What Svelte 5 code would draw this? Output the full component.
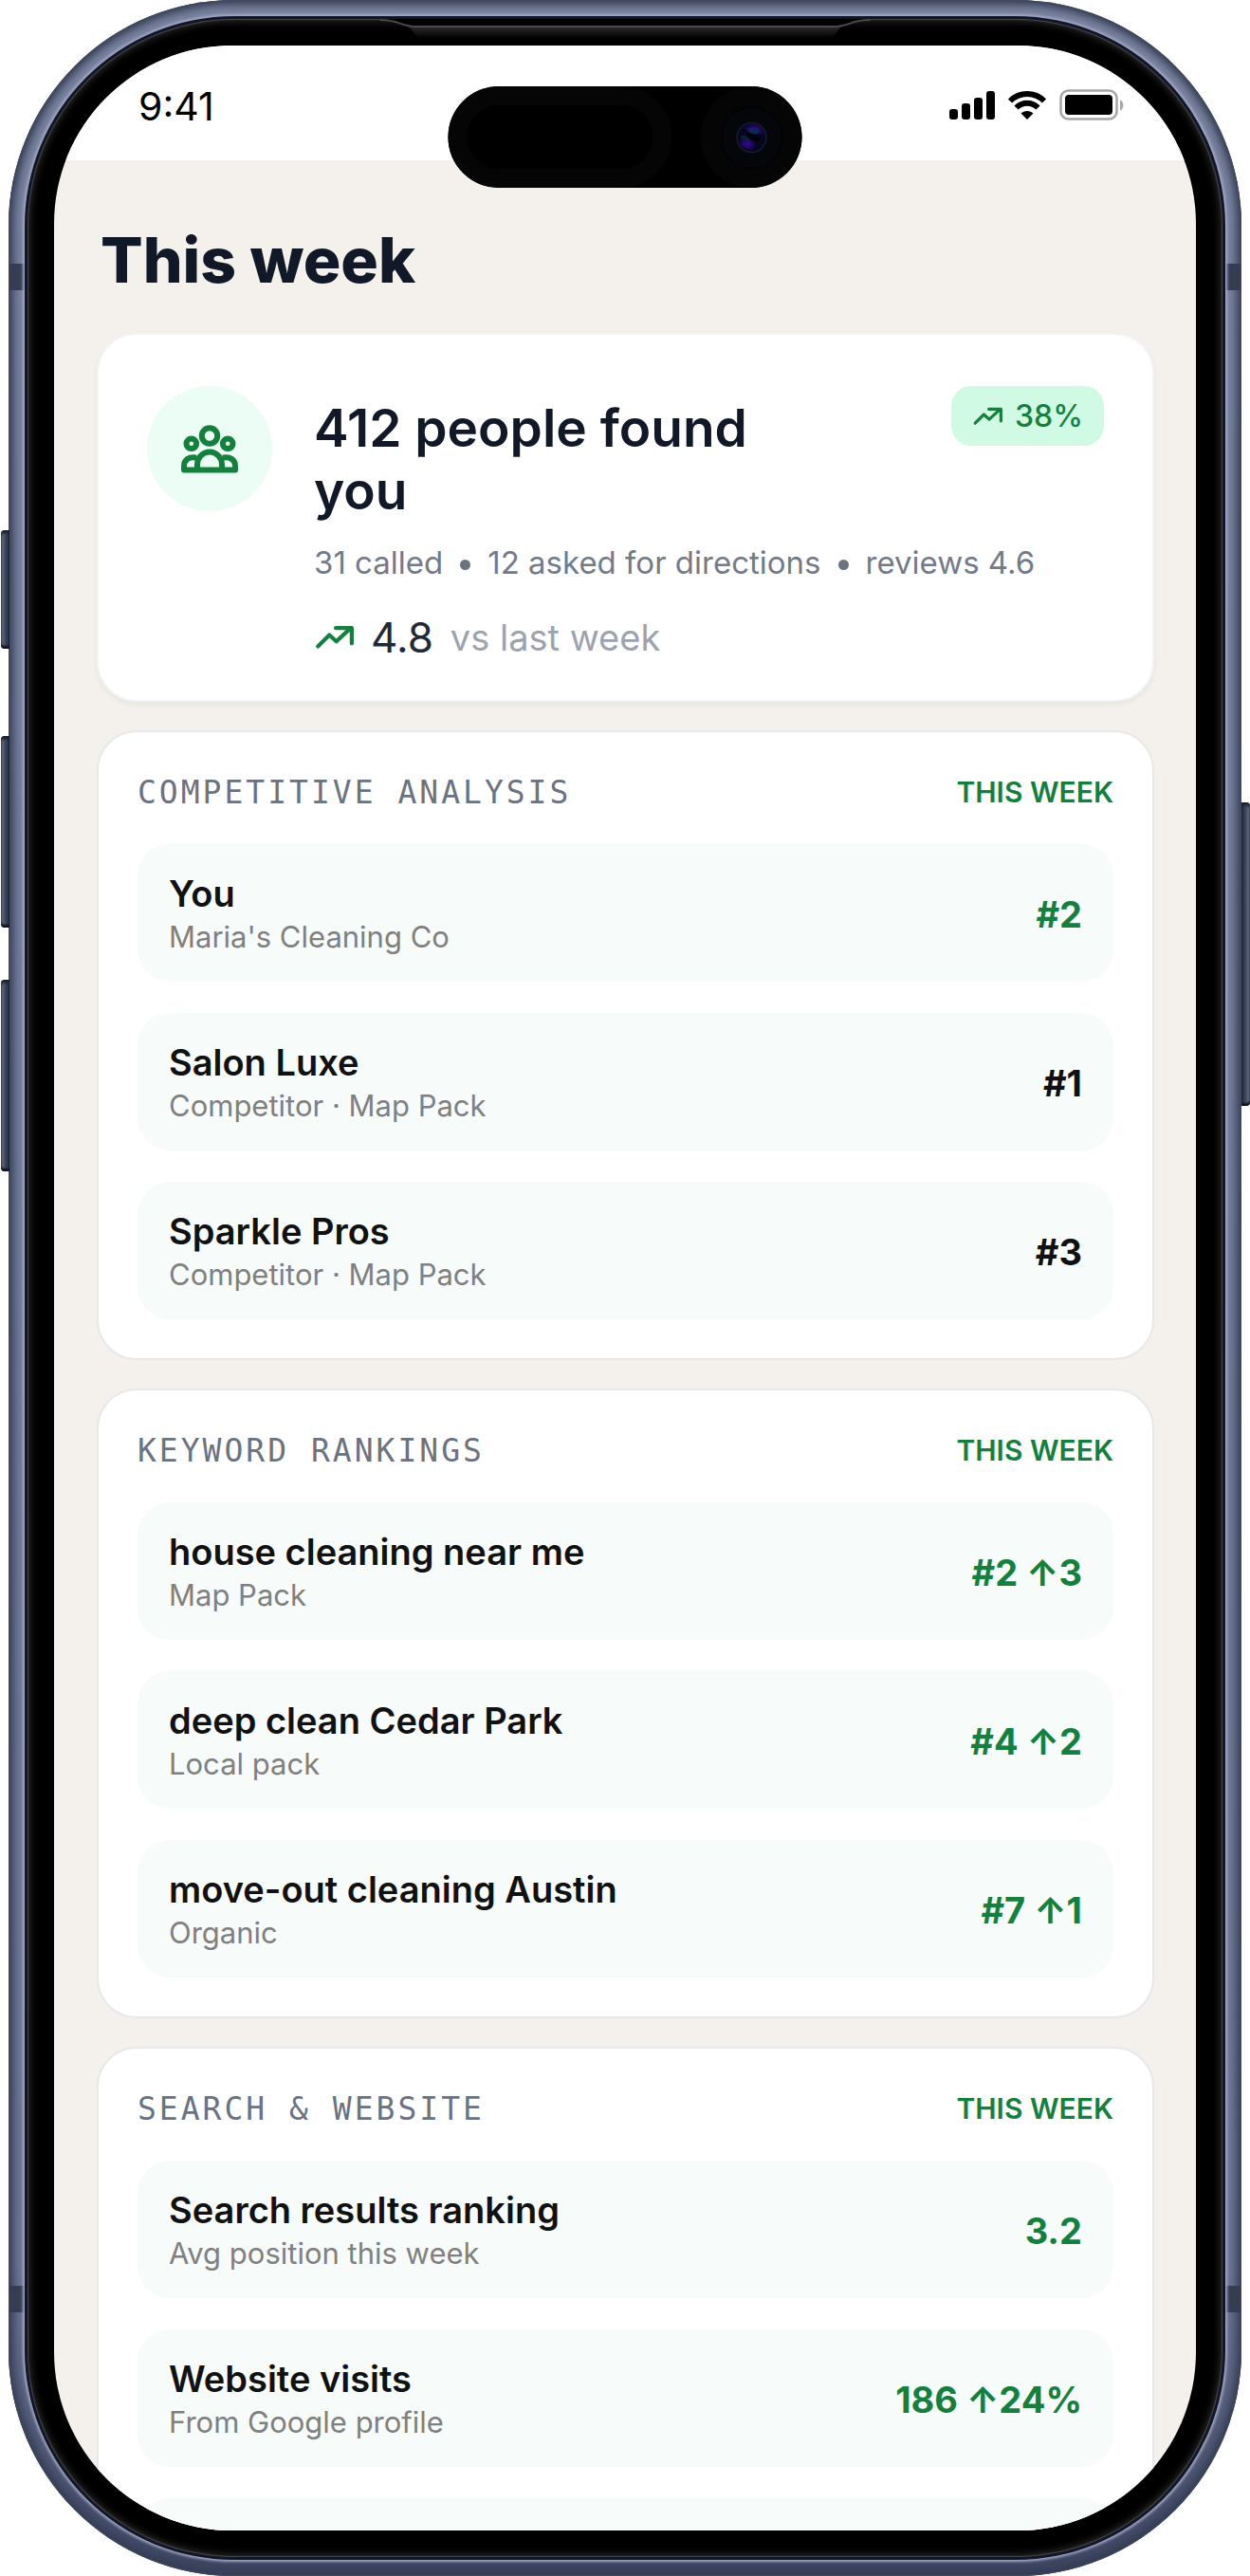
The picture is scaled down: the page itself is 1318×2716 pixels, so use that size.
<script>
  const sections = [
    {
      title: 'Competitive analysis',
      rows: [
        { name: 'You', note: "Maria's Cleaning Co", value: '#2', up: true },
        { name: 'Salon Luxe', note: 'Competitor · Map Pack', value: '#1', up: false },
        { name: 'Sparkle Pros', note: 'Competitor · Map Pack', value: '#3', up: false },
      ],
    },
    {
      title: 'Keyword rankings',
      rows: [
        { name: 'house cleaning near me', note: 'Map Pack', value: '#2 ↑3', up: true },
        { name: 'deep clean Cedar Park', note: 'Local pack', value: '#4 ↑2', up: true },
        { name: 'move-out cleaning Austin', note: 'Organic', value: '#7 ↑1', up: true },
      ],
    },
    {
      title: 'Search & website',
      rows: [
        { name: 'Search results ranking', note: 'Avg position this week', value: '3.2', up: true },
        { name: 'Website visits', note: 'From Google profile', value: '186 ↑24%', up: true },
        { name: '', note: '', value: '', up: false },
      ],
    },
  ];
</script>

{#snippet trend(width)}
  <svg class="trend" {width} viewBox="-2 0 40 24" aria-hidden="true">
    <path d="M2 21.500L13.500 10L20.500 16.500L35 3M20 3H36V18.500" />
  </svg>
{/snippet}

<div class="phone">
  <span class="key action"></span>
  <span class="key vol-up"></span>
  <span class="key vol-down"></span>
  <span class="key power"></span>
  <span class="band tl"></span>
  <span class="band tr"></span>
  <span class="band bl"></span>
  <span class="band br"></span>

  <div class="bezel">
    <svg class="earpiece" width="516" height="22" viewBox="0 0 516 22" aria-hidden="true">
      <defs>
        <linearGradient id="lip" x1="0" y1="0" x2="0" y2="1">
          <stop offset="0" stop-color="#2c2c2c" />
          <stop offset="1" stop-color="#000" />
        </linearGradient>
      </defs>
      <path d="M0 0H516V1C494 1 497 8 476 8H40C19 8 22 1 0 1Z" fill="#000" />
      <path d="M30 8H486L476 20H40Z" fill="url(#lip)" />
      <path d="M0 1C22 1 19 8 40 8H476C497 8 494 1 516 1" fill="none" stroke="#4a4a4a" stroke-width="2" />
    </svg>

    <div class="screen">
      <header class="status">
        <time>9:41</time>
        <div class="status-icons">
          <svg width="48" height="32" viewBox="0 0 48 32" aria-hidden="true">
            <rect x="0" y="20" width="9" height="11" rx="3" />
            <rect x="13" y="14" width="9" height="17" rx="3" />
            <rect x="26" y="8" width="9" height="23" rx="3" />
            <rect x="39" y="1" width="9" height="30" rx="3" />
          </svg>
          <svg width="42" height="32" viewBox="0 0 42 32" aria-hidden="true">
            <path d="M3 11.500C13 1.500 29 1.500 39 11.500" fill="none" stroke="#000" stroke-width="6" />
            <path d="M9.500 18.500C16 12 26 12 32.500 18.500" fill="none" stroke="#000" stroke-width="6" />
            <path d="M14.500 24.500C18 21 24 21 27.500 24.500L21 31Z" />
          </svg>
          <svg width="68" height="34" viewBox="0 0 68 34" aria-hidden="true">
            <rect x="1.500" y="1.500" width="59" height="30" rx="8" fill="none" stroke="#a6a6a6" stroke-width="2.500" />
            <rect x="6" y="6" width="50" height="21" rx="4" />
            <path d="M64 11.500C68.500 13 68.500 21 64 22.500Z" fill="#a6a6a6" />
          </svg>
        </div>
      </header>

      <main>
        <h1>This week</h1>

        <section class="card summary">
          <div class="avatar">
            <svg width="60" height="51" viewBox="0 0 60 51" aria-hidden="true">
              <circle cx="30" cy="11.500" r="8.200" />
              <circle cx="10.800" cy="19.800" r="5.300" />
              <circle cx="49.200" cy="19.800" r="5.300" />
              <path d="M17 47.500V41.500A13 13 0 0 1 43 41.500V47.500" />
              <path d="M16 34.500C8 33 3 37 3 43.500V47.500H57V43.500C57 37 52 33 44 34.500" />
            </svg>
          </div>
          <div class="summary-text">
            <div class="summary-head">
              <h2>412 people found you</h2>
              <span class="badge">{@render trend(32)}38%</span>
            </div>
            <p class="facts">
              <span>31 called</span><i></i><span>12 asked for directions</span><i></i><span>reviews 4.6</span>
            </p>
            <p class="score">
              {@render trend(42)}
              <strong>4.8</strong>
              <span>vs last week</span>
            </p>
          </div>
        </section>

        {#each sections as section}
          <section class="card group">
            <div class="group-head">
              <h3>{section.title}</h3>
              <span>THIS WEEK</span>
            </div>
            <ul>
              {#each section.rows as row}
                <li>
                  <div>
                    <p class="name">{row.name}</p>
                    <p class="note">{row.note}</p>
                  </div>
                  <b class:up={row.up}>{row.value}</b>
                </li>
              {/each}
            </ul>
          </section>
        {/each}
      </main>
    </div>

    <div class="island">
      <span class="sensor"></span>
      <span class="camera">
        <svg width="66" height="66" viewBox="0 0 66 66" aria-hidden="true">
          <defs>
            <radialGradient id="flare">
              <stop offset="0" stop-color="#330a94" />
              <stop offset="1" stop-color="#12043c" />
            </radialGradient>
          </defs>
          <circle cx="33" cy="33" r="32" fill="#04060a" stroke="#020305" stroke-width="2" />
          <circle cx="33" cy="33" r="15.500" fill="#06061f" stroke="#141d33" stroke-width="1.500" />
          <path d="M26 22C32 16 44 19 46 29C44 34 40 27 34 27C29 27 25 26 26 22Z" fill="url(#flare)" />
          <path d="M20 36C24 31 30 33 35 38C39 42 36 47 31 46C25 45 20 42 20 36Z" fill="url(#flare)" />
          <ellipse cx="35" cy="26" rx="6" ry="3" fill="#0c2950" transform="rotate(15 35 26)" />
          <ellipse cx="26" cy="34" rx="5" ry="3" fill="#0a1c40" transform="rotate(30 26 34)" />
          <ellipse cx="35" cy="33" rx="8" ry="3" fill="#020208" transform="rotate(20 35 33)" />
        </svg>
      </span>
    </div>
  </div>
</div>

<style>
  :global(body) {
    background: #fff;
  }
  .phone {
    position: relative;
    box-sizing: border-box;
    height: 100vh;
    margin: 0 9px;
    padding: 20px;
    border-radius: 238px;
    background: linear-gradient(#79829e, #6c7592 88%, #3c4460);
    box-shadow: inset 0 0 1px 1px #434a5c, inset 0 0 8px 5px #343c54;
    font-family: Inter, "Liberation Sans", sans-serif;
  }
  .key {
    position: absolute;
    left: -8px;
    width: 9px;
    border-radius: 4px 0 0 4px;
    background: linear-gradient(90deg, #7c8497, #414a62 45%, #262c42);
    box-shadow: inset 0 3px 3px #1a1f30, inset 0 -3px 2px #10131f;
  }
  .action { top: 559px; height: 125px; }
  .vol-up { top: 776px; height: 202px; }
  .vol-down { top: 1033px; height: 202px; }
  .power {
    top: 846px;
    right: -9px;
    left: auto;
    height: 320px;
    border-radius: 0 4px 4px 0;
    background: linear-gradient(270deg, #7c8497, #414a62 45%, #262c42);
  }
  .band {
    position: absolute;
    width: 17px;
    height: 28px;
    background: #363c52;
  }
  .tl { top: 278px; left: 1px; }
  .tr { top: 278px; right: 1px; }
  .bl { bottom: 278px; left: 1px; }
  .br { bottom: 278px; right: 1px; }

  .bezel {
    position: relative;
    box-sizing: border-box;
    height: 100%;
    padding: 28px;
    border-radius: 218px;
    background: #000;
    box-shadow: inset 0 0 1px 1px #484848, inset 0 0 9px 2px #303030,
      0 0 0 3px #11162a, 0 0 3px 5px #a3aac6;
  }
  .earpiece {
    position: absolute;
    top: 0;
    left: 50%;
    transform: translateX(-50%);
  }
  .screen {
    height: 100%;
    overflow: hidden;
    border-radius: 188px;
    background: #f4f0eb;
  }
  .island {
    position: absolute;
    top: 71px;
    left: 50%;
    display: flex;
    justify-content: space-between;
    width: 373px;
    height: 107px;
    border-radius: 54px;
    background: #000;
    transform: translateX(-50%);
  }
  .sensor {
    box-sizing: border-box;
    width: 236px;
    border: 20px solid #050505;
    border-radius: 54px;
  }
  .camera {
    display: grid;
    place-items: center;
    width: 107px;
    border-radius: 50%;
    background: #050505;
  }

  .status {
    display: flex;
    align-items: flex-start;
    justify-content: space-between;
    box-sizing: border-box;
    height: 121px;
    padding: 40px 76px 0 89px;
    background: #fff;
  }
  time {
    font-size: 41px;
    line-height: 48px;
    color: #000;
  }
  .status-icons {
    display: flex;
    align-items: center;
    gap: 13px;
    padding-top: 6px;
  }

  main {
    display: flex;
    flex-direction: column;
    gap: 30px;
    padding: 64px 44px 0 45px;
  }
  h1, h2, h3, p, ul {
    margin: 0;
    padding: 0;
  }
  h1 {
    padding-left: 4px;
    font-size: 66px;
    font-weight: 800;
    line-height: 82px;
    color: #111827;
  }
  .card {
    border: 2px solid #e7e8ea;
    border-radius: 42px;
    background: #fff;
  }
  .summary {
    display: flex;
    gap: 44px;
    margin-top: 6px;
    padding: 54px 51px 38px;
    border-color: #f3f4f6;
    box-shadow: 0 3px 6px rgba(0, 0, 0, 0.05);
  }
  .avatar {
    display: grid;
    flex-shrink: 0;
    place-items: center;
    width: 132px;
    height: 132px;
    border-radius: 50%;
    background: #ecfdf5;
  }
  .avatar svg {
    fill: none;
    stroke: #15803d;
    stroke-width: 6;
    stroke-linejoin: round;
  }
  .summary-text {
    flex: 1;
    min-width: 0;
  }
  .summary-head {
    display: flex;
    align-items: flex-start;
    justify-content: space-between;
    gap: 44px;
  }
  h2 {
    max-width: 500px;
    padding-top: 11px;
    font-size: 55px;
    font-weight: 600;
    line-height: 66px;
    color: #111827;
  }
  .trend {
    fill: none;
    stroke: #15803d;
    stroke-width: 4;
    stroke-linecap: round;
    stroke-linejoin: round;
  }
  .badge {
    display: flex;
    align-items: center;
    gap: 13px;
    padding: 11px 22px 10px;
    border-radius: 21px;
    background: #d1fae5;
    font-size: 32px;
    font-weight: 500;
    line-height: 42px;
    color: #15803d;
  }
  .facts {
    display: flex;
    align-items: center;
    margin-top: 22px;
    font-size: 33px;
    line-height: 42px;
    white-space: nowrap;
    color: #737a88;
  }
  .facts i {
    width: 11px;
    height: 11px;
    margin: 4px 18px 0;
    border-radius: 50%;
    background: #6b7280;
  }
  .score {
    display: flex;
    align-items: center;
    gap: 18px;
    margin-top: 30px;
    font-size: 38px;
    line-height: 56px;
    color: #9ca3af;
  }
  .score strong {
    font-size: 44px;
    font-weight: 400;
    color: #1f2937;
  }

  .group {
    padding: 41px;
  }
  .group-head {
    display: flex;
    align-items: center;
    justify-content: space-between;
    height: 44px;
    margin-bottom: 33px;
  }
  h3 {
    font-family: "DejaVu Sans Mono", monospace;
    font-size: 33px;
    font-weight: 400;
    letter-spacing: 3px;
    text-transform: uppercase;
    color: #6b7280;
  }
  .group-head span {
    font-size: 30px;
    font-weight: 600;
    color: #15803d;
  }
  ul {
    display: flex;
    flex-direction: column;
    gap: 33px;
    list-style: none;
  }
  li {
    display: flex;
    align-items: center;
    justify-content: space-between;
    box-sizing: border-box;
    min-height: 145px;
    padding: 28px 33px 25px;
    border-radius: 34px;
    background: #f7fbfa;
  }
  .name {
    font-size: 38px;
    font-weight: 600;
    line-height: 48px;
    color: #111;
  }
  .note {
    font-size: 31px;
    line-height: 44px;
    color: #808080;
  }
  b {
    font-size: 38px;
    font-weight: 700;
    color: #111;
  }
  .up {
    color: #15803d;
  }
</style>
